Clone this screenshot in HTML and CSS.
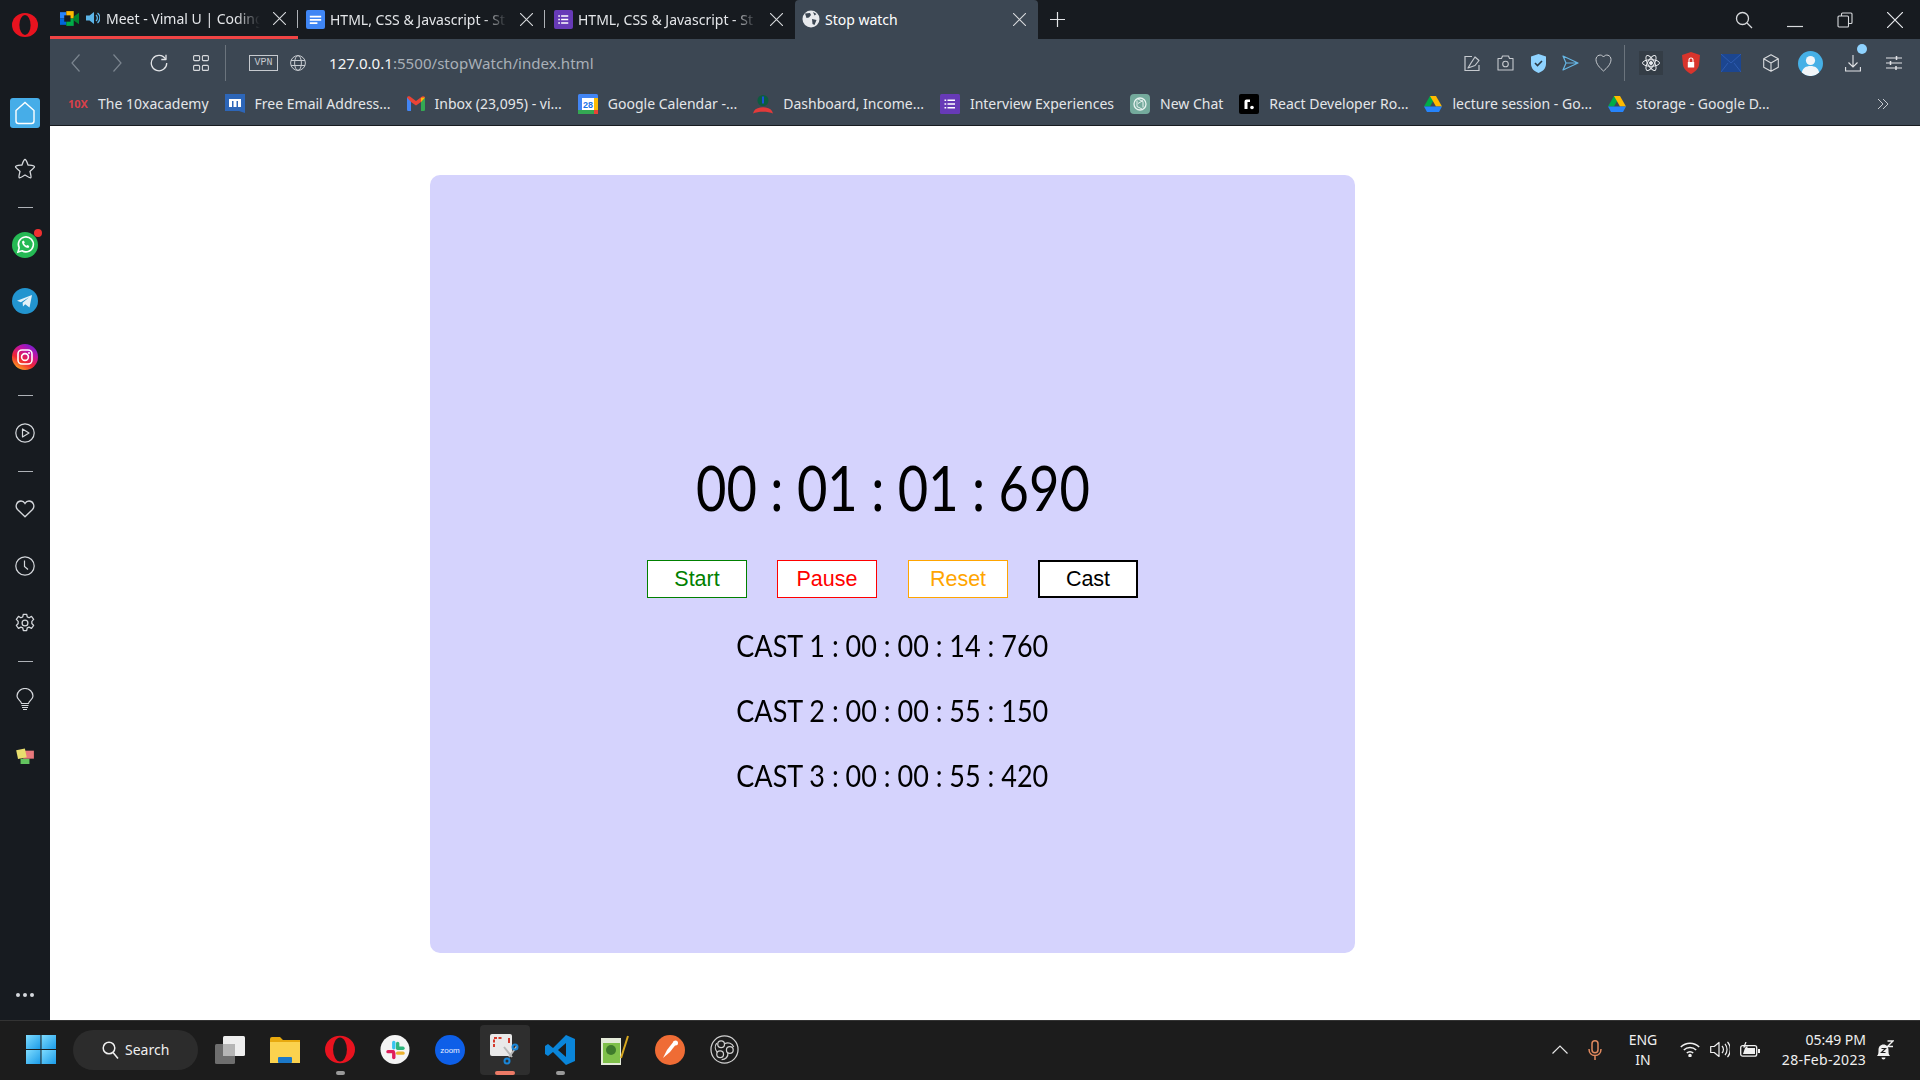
FILE: index.html
```html
<!DOCTYPE html>
<html>
<head>
    <meta charset="UTF-8">
    <title>Stop watch</title>
    <link rel="stylesheet" href="styles.css">
</head>
<body>
<div class="window">
    <!-- left strip -->
    <div class="sidebar">
        <svg class="opera-logo" viewBox="0 0 26 24"><ellipse cx="13" cy="12" rx="13" ry="12" fill="#e8131f"/><ellipse cx="13" cy="12" rx="5.6" ry="10" fill="#171b20"/></svg>
        <div class="side-slot"><div class="home-btn"><svg width="22" height="24" viewBox="0 0 22 24" fill="none" stroke="#fff" stroke-width="1.4"><path d="M2 9.5 11 1.5l9 8V20a2.5 2.5 0 0 1-2.5 2.5h-13A2.500 2.500 0 0 1 2 20z"/></svg></div></div>
        <div class="side-slot"><svg width="22" height="22" viewBox="0 0 22 22" fill="none" stroke="#d5d8dc" stroke-width="1.3" stroke-linejoin="round"><path d="M11 1.5c1 0 1.500 1 3 5.500 5 .5 6.500.5 6.500 1.700 0 .8-2 2.500-4.500 4.800 1 4 1.500 5.500.8 6.200-.8.6-2.500-.6-5.800-2.700-3.300 2.100-5 3.300-5.800 2.700-.7-.7-.2-2.200.8-6.200-2.500-2.300-4.500-4-4.500-4.800C1.500 7.500 3 7.500 8 7c1.500-4.500 2-5.500 3-5.500z"/></svg></div>
        <div class="side-divider"></div>
        <div class="side-slot"><div class="badge-wrap"><svg width="26" height="26" viewBox="0 0 26 26"><circle cx="13" cy="13" r="13" fill="#25b954"/><path d="M6 20l1.200-4.200A7.500 7.500 0 1 1 10 18.800z" fill="none" stroke="#fff" stroke-width="1.600"/><path d="M10 9.500c0 3.500 3 6.500 6.500 6.500l.8-2-2-1-1 .8c-1-.5-1.800-1.300-2.300-2.300l.8-1-1-2z" fill="#fff"/></svg><span class="red-badge"></span></div></div>
        <div class="side-slot"><svg width="26" height="26" viewBox="0 0 26 26"><circle cx="13" cy="13" r="13" fill="#2294cf"/><path d="M5 12.800 20 7l-2.500 12.500-4.300-3.200-2.200 2.200-.4-3.800 6.500-5.500-8.200 5z" fill="#e4f1f8"/></svg></div>
        <div class="side-slot"><svg width="26" height="26" viewBox="0 0 26 26"><defs><linearGradient id="igGrad" x1="0.2" y1="1" x2="0.8" y2="0"><stop offset="0" stop-color="#fdb224"/><stop offset="0.35" stop-color="#f0262f"/><stop offset="0.7" stop-color="#c013a6"/><stop offset="1" stop-color="#6a22d8"/></linearGradient></defs><circle cx="13" cy="13" r="13" fill="url(#igGrad)"/><rect x="6" y="6" width="14" height="14" rx="4" fill="none" stroke="#fff" stroke-width="1.6"/><circle cx="13" cy="13" r="3.4" fill="none" stroke="#fff" stroke-width="1.6"/><circle cx="17" cy="9" r="1" fill="#fff"/></svg></div>
        <div class="side-divider"></div>
        <div class="side-slot"><svg width="20" height="20" viewBox="0 0 20 20" fill="none" stroke="#d5d8dc" stroke-width="1.2"><circle cx="10" cy="10" r="9.2"/><path d="M7.500 6v8l6.500-4z" stroke-linejoin="round"/></svg></div>
        <div class="side-divider"></div>
        <div class="side-slot"><svg width="20" height="18" viewBox="0 0 20 18" fill="none" stroke="#d5d8dc" stroke-width="1.3"><path d="M10 16.800 2.500 9.500C-.5 6 2 1 6 1c1.800 0 3.200 1 4 2.400C10.800 2 12.200 1 14 1c4 0 6.500 5 3.500 8.500z"/></svg></div>
        <div class="side-slot tall"><svg width="20" height="20" viewBox="0 0 20 20" fill="none" stroke="#d5d8dc" stroke-width="1.2"><circle cx="10" cy="10" r="9.2"/><path d="M9.500 4.500v6l3.500 3"/></svg></div>
        <div class="side-slot tall"><svg width="20" height="20" viewBox="0 0 24 24" fill="none" stroke="#d5d8dc" stroke-width="1.5"><circle cx="12" cy="12" r="3.5"/><path d="M10 1.500h4l.7 3.200 2.200 1 2.900-1.600 2.600 3.500-2.200 2.400v2.600l2.200 2.400-2.600 3.500-2.900-1.600-2.200 1-.7 3.100h-4l-.7-3.100-2.200-1-2.900 1.600-2.600-3.500 2.200-2.400V10L1.600 7.600l2.600-3.500 2.900 1.600 2.200-1z" stroke-linejoin="round"/></svg></div>
        <div class="side-divider"></div>
        <div class="side-slot tall"><svg width="18" height="23" viewBox="0 0 18 23" fill="none" stroke="#d5d8dc" stroke-width="1.2"><path d="M5.500 15.500C5 12.800 1 11.500 1 8a8 7.500 0 0 1 16 0c0 3.500-4 4.800-4.500 7.500z"/><path d="M5.500 17.500h7M6 19.500h6M7 21.500h4"/></svg></div>
        <div class="side-slot"><svg width="18" height="16" viewBox="0 0 20 18"><rect x="5" y="12" width="10" height="6" fill="#63c45f"/><rect x="8" y="3" width="12" height="9" fill="#e8787c"/><rect x="1" y="1.500" width="10" height="10" fill="#e8de6e" transform="rotate(-12 6 6.500)"/></svg></div>
        <div class="side-dots"><span></span><span></span><span></span></div>
    </div>

    <div class="browser">
        <!-- tabs -->
        <div class="tabbar">
            <div class="tab tab-first">
                <svg class="favicon" viewBox="0 0 18 18"><rect x="0" y="3" width="6" height="6" fill="#2684fc"/><rect x="0" y="9" width="6" height="6" fill="#0066da"/><rect x="6" y="2" width="7" height="7" fill="#ffba00"/><rect x="6" y="9" width="7" height="7" fill="#00ac47"/><path d="m13 7 5-3.500v11L13 11z" fill="#00832d"/><rect x="4" y="6" width="6" height="6" fill="#171b20"/></svg>
                <svg class="speaker" viewBox="0 0 14 14"><path d="M0 4.500h3.500L8 1v12L3.500 9.500H0z" fill="#5cb5e8"/><path d="M10 4a4 4 0 0 1 0 6M11.500 2a6.500 6.500 0 0 1 0 10" fill="none" stroke="#5cb5e8" stroke-width="1.3"/></svg>
                <span class="tab-title">Meet - Vimal U | Coding</span>
                <svg class="tab-close" viewBox="0 0 12 12"><path d="M0 0l12 12M12 0 0 12"/></svg>
            </div>
            <div class="tab tab-second">
                <svg class="favicon" viewBox="0 0 20 20"><rect width="20" height="20" rx="2" fill="#3f86f5"/><path d="M4 6h12v1.800H4zM4 9.500h12v1.800H4zM4 13h8v1.800H4z" fill="#fff"/></svg>
                <span class="tab-title">HTML, CSS &amp; Javascript - St</span>
                <svg class="tab-close" viewBox="0 0 12 12"><path d="M0 0l12 12M12 0 0 12"/></svg>
            </div>
            <div class="tab tab-third">
                <svg class="favicon" viewBox="0 0 20 20"><rect width="20" height="20" rx="2" fill="#673ab7"/><path d="M7.500 5.500H15v1.600H7.500zM7.500 9.200H15v1.600H7.500zM7.500 12.900H15v1.600H7.500zM4.500 5.500h1.700v1.600H4.500zM4.500 9.200h1.700v1.600H4.500zM4.500 12.900h1.700v1.600H4.500z" fill="#fff"/></svg>
                <span class="tab-title">HTML, CSS &amp; Javascript - St</span>
                <svg class="tab-close" viewBox="0 0 12 12"><path d="M0 0l12 12M12 0 0 12"/></svg>
            </div>
            <div class="tab tab-active">
                <svg class="favicon globe-fav" viewBox="0 0 18 18"><circle cx="9" cy="9" r="8.500" fill="#e8eaed"/><path d="M3 3.500 8 3l1 2-2 2.500L4.500 8zM10 9l4.500 1-2 5-2-1zM11 2l3.500 2-2 1.500z" fill="#3c4753"/></svg>
                <span class="tab-title">Stop watch</span>
                <svg class="tab-close" viewBox="0 0 12 12"><path d="M0 0l12 12M12 0 0 12"/></svg>
            </div>
            <svg class="new-tab" viewBox="0 0 15 15"><path d="M7.500 0v15M0 7.500h15"/></svg>
            <div class="window-btns">
                <svg width="18" height="18" viewBox="0 0 18 18" fill="none" stroke="#d8dadd" stroke-width="1.3"><circle cx="7.500" cy="7.500" r="6"/><path d="m12 12 5 5"/></svg>
                <svg width="16" height="18" viewBox="0 0 16 18" fill="none" stroke="#d8dadd" stroke-width="1.2"><path d="M0 15.500h16"/></svg>
                <svg width="16" height="16" viewBox="0 0 16 16" fill="none" stroke="#d8dadd" stroke-width="1.1"><rect x="1" y="4" width="10.500" height="11" rx="1"/><path d="M4.500 4V2a1 1 0 0 1 1-1H14a1 1 0 0 1 1 1v8.500a1 1 0 0 1-1 1h-2.500"/></svg>
                <svg width="16" height="16" viewBox="0 0 16 16" fill="none" stroke="#e8eaed" stroke-width="1.2"><path d="M0 0l16 16M16 0 0 16"/></svg>
            </div>
        </div>

        <!-- address bar -->
        <div class="toolbar">
            <svg class="nav-back" width="9" height="18" viewBox="0 0 9 18" fill="none" stroke="#7b858f" stroke-width="1.2"><path d="M8.500.5 1 9l7.500 8.500"/></svg>
            <svg class="nav-forward" width="9" height="18" viewBox="0 0 9 18" fill="none" stroke="#7b858f" stroke-width="1.2"><path d="M.5.500 8 9 .5 17.500"/></svg>
            <svg class="nav-reload" width="18" height="18" viewBox="0 0 18 18" fill="none" stroke="#e2e4e7" stroke-width="1.3"><path d="M15.500 5A7.700 7.700 0 1 0 16.700 9"/><path d="M16 .8V5.500h-4.700" stroke-linejoin="round"/></svg>
            <svg class="nav-grid" width="16" height="16" viewBox="0 0 16 16" fill="none" stroke="#d8dadd" stroke-width="1.1"><rect x=".6" y=".6" width="6" height="5" rx="1"/><rect x="9.400" y=".6" width="6" height="5" rx="1"/><rect x=".6" y="10.400" width="6" height="5" rx="1"/><rect x="9.400" y="10.400" width="6" height="5" rx="1"/></svg>
            <div class="bar-sep"></div>
            <div class="vpn">VPN</div>
            <svg class="nav-globe" width="16" height="16" viewBox="0 0 16 16" fill="none" stroke="#c6cacf" stroke-width="1"><circle cx="8" cy="8" r="7.400"/><ellipse cx="8" cy="8" rx="3.400" ry="7.400"/><path d="M1 5.500h14M1 10.500h14"/></svg>
            <div class="url"><span class="url-host">127.0.0.1</span>:5500/stopWatch/index.html</div>

            <div class="tools">
                <div class="tool"><svg width="18" height="18" viewBox="0 0 18 18" fill="none" stroke="#c6cacf" stroke-width="1.2"><path d="M8 2.500H1v14h14V11"/><path d="m4 14 3-5 4-6 4 3.500-4 5z" stroke-linejoin="round"/></svg></div>
                <div class="tool"><svg width="17" height="16" viewBox="0 0 17 16" fill="none" stroke="#c6cacf" stroke-width="1.1"><path d="M1 3.500h3.500L5.500 1h6l1 2.500H16V15H1z" stroke-linejoin="round"/><circle cx="8.500" cy="9" r="2.800"/></svg></div>
                <div class="tool"><svg width="15" height="19" viewBox="0 0 15 19"><path d="M7.500 0 15 2.500V10c0 4.500-3.500 7.500-7.500 9C3.500 17.500 0 14.500 0 10V2.500z" fill="#8fd3ff"/><path d="m4 9 2.500 2.500L11 7" fill="none" stroke="#2b3a47" stroke-width="1.6"/></svg></div>
                <div class="tool"><svg width="17" height="16" viewBox="0 0 17 16" fill="none" stroke="#66b6e4" stroke-width="1.2"><path d="m1 1 15 7-15 7 3-7zM4 8h12" stroke-linejoin="round"/></svg></div>
                <div class="tool"><svg width="17" height="18" viewBox="0 0 17 18" fill="none" stroke="#c6cacf" stroke-width="1"><path d="M8.500 17C5 14 1 10 1 5.500 1 1 6.500-.5 8.500 3c2-3.500 7.500-2 7.500 2.500C16 10 12 14 8.500 17z"/></svg></div>
                <div class="bar-sep tools-sep"></div>
                <div class="ext"><div class="atom-bg"><svg width="18" height="18" viewBox="0 0 18 18" fill="none" stroke="#e8eaed" stroke-width="1"><ellipse cx="9" cy="9" rx="8.500" ry="3.300"/><ellipse cx="9" cy="9" rx="8.500" ry="3.300" transform="rotate(60 9 9)"/><ellipse cx="9" cy="9" rx="8.500" ry="3.300" transform="rotate(120 9 9)"/><circle cx="9" cy="9" r="1.500" fill="#e8eaed"/></svg></div></div>
                <div class="ext"><svg width="18" height="22" viewBox="0 0 18 22"><path d="M9 0l9 3-1 10c-.7 4-4 7-8 9-4-2-7.300-5-8-9L0 3z" fill="#d8342c"/><rect x="5.800" y="10" width="6.400" height="5.500" fill="#fff"/><path d="M7 10V8a2 2 0 0 1 4 0v2" fill="none" stroke="#fff" stroke-width="1.1"/></svg></div>
                <div class="ext"><svg width="20" height="18" viewBox="0 0 20 18"><rect width="20" height="18" fill="#1c4690"/><path d="m0 0 10 9 10-9M0 18l7-9M20 18l-7-9" fill="none" stroke="#2e5cb0" stroke-width="1"/></svg></div>
                <div class="ext"><svg width="16" height="18" viewBox="0 0 16 18" fill="none" stroke="#d8dadd" stroke-width="1.1"><path d="M8 .7 15.300 4.800v8.400L8 17.300.7 13.200V4.800zM.7 4.800 8 9l7.300-4.200M8 9v8.300" stroke-linejoin="round"/></svg></div>
                <div class="ext"><svg width="25" height="25" viewBox="0 0 25 25"><circle cx="12.500" cy="12.500" r="12.500" fill="#46b0e6"/><circle cx="12.500" cy="9.500" r="4.600" fill="#f2f6f9"/><path d="M3.800 21.500c1-4.500 4.200-6.500 8.700-6.500s7.700 2 8.700 6.500a12.500 12.500 0 0 1-17.400 0z" fill="#f2f6f9"/></svg></div>
                <div class="ext download-tool"><svg width="16" height="18" viewBox="0 0 16 18" fill="none" stroke="#e2e4e7" stroke-width="1.1"><path d="M8 1v12M3.500 8.500 8 13l4.500-4.500M.6 13v4h14.800v-4"/></svg><span class="download-dot"></span></div>
                <div class="ext settings-tool"><svg width="16" height="16" viewBox="0 0 16 16" fill="none" stroke="#e2e4e7" stroke-width="1.1"><path d="M0 3h16M0 8h16M0 13h16"/><path d="M10.500 1v4M4.500 6v4M10 11v4" stroke-width="1.5"/></svg></div>
            </div>
        </div>

        <!-- bookmarks -->
        <div class="bookmarks">
            <div class="bm"><span class="tenx">10X</span><span>The 10xacademy</span></div>
            <div class="bm"><svg width="20" height="24" viewBox="0 0 20 24"><path d="M0 2h20v19l-6-2-14 0z" fill="#2d66b8"/><path d="M4 15V7h3v8zM8.500 15V7h3v8zM13 15V7h3v8zM4 7h12v2H4z" fill="#fff"/></svg><span>Free Email Address...</span></div>
            <div class="bm"><svg width="18" height="15" viewBox="0 0 18 15"><path d="M0 1.500 4 4v11H1.200A1.200 1.200 0 0 1 0 13.800z" fill="#4285f4"/><path d="M14 4l4-2.500v12.300a1.200 1.200 0 0 1-1.200 1.200H14z" fill="#34a853"/><path d="M0 1.500C.5 0 2 0 3 .6L9 5l6-4.400c1-.6 2.500-.6 3 .9L14 6 9 9.500 4 6z" fill="#ea4335"/><path d="M14 1.700 18 1.500 14 6z" fill="#fbbc04"/></svg><span>Inbox (23,095) - vi...</span></div>
            <div class="bm"><svg width="20" height="20" viewBox="0 0 20 20"><rect width="20" height="20" rx="1.500" fill="#4285f4"/><rect x="4" y="4" width="12" height="12" fill="#fff"/><rect y="16" width="16" height="4" fill="#34a853"/><rect x="16" y="4" width="4" height="12" fill="#fbbc04"/><rect x="16" y="16" width="4" height="4" fill="#ea4335"/><text x="10" y="13.500" class="cal-day">28</text></svg><span>Google Calendar -...</span></div>
            <div class="bm"><svg width="20" height="20" viewBox="0 0 20 20"><circle cx="10" cy="6.500" r="5.500" fill="#0d5c3f"/><rect x="9" y="2.500" width="2" height="7" fill="#1d4ed8"/><path d="M1 17c3-5 15-5 18 0l1 2.500c-5-2.500-15-2.500-20 0z" fill="#e23a3a"/></svg><span>Dashboard, Income...</span></div>
            <div class="bm"><svg width="20" height="24" viewBox="0 0 20 24"><rect y="2" width="20" height="20" rx="1.500" fill="#673ab7"/><path d="M7.500 7.500H15v1.600H7.500zM7.500 11.200H15v1.600H7.500zM7.500 14.900H15v1.600H7.500zM4.500 7.500h1.700v1.600H4.500zM4.500 11.200h1.700v1.600H4.500zM4.500 14.900h1.700v1.600H4.500z" fill="#fff"/></svg><span>Interview Experiences</span></div>
            <div class="bm"><svg width="20" height="24" viewBox="0 0 20 24"><rect y="2" width="20" height="20" rx="4" fill="#74aa9c"/><circle cx="10" cy="12" r="6" fill="none" stroke="#e8f3f0" stroke-width="1.3"/><path d="M7 8.500v6l5 2.500M13 8.500l-5 3v0M13 15.500v-6L8 7" fill="none" stroke="#e8f3f0" stroke-width="1"/></svg><span>New Chat</span></div>
            <div class="bm"><svg width="20" height="24" viewBox="0 0 20 24"><rect y="2" width="20" height="20" rx="2" fill="#000"/><path d="M5.500 17V9.500a2 2 0 0 1 2-2h3.500v2.500H8.500V17z" fill="#fff"/><circle cx="13" cy="15.500" r="1.800" fill="#fff"/></svg><span>React Developer Ro...</span></div>
            <div class="bm"><svg width="18" height="16" viewBox="0 0 18 16"><path d="M6 0h6L6 10.500H0z" fill="#00ac47"/><path d="M12 0l6 10.500h-6L6 0z" fill="#ffba00"/><path d="M0 10.500h18L15 16H3z" fill="#2684fc"/></svg><span>lecture session - Go...</span></div>
            <div class="bm"><svg width="18" height="16" viewBox="0 0 18 16"><path d="M6 0h6L6 10.500H0z" fill="#00ac47"/><path d="M12 0l6 10.500h-6L6 0z" fill="#ffba00"/><path d="M0 10.500h18L15 16H3z" fill="#2684fc"/></svg><span>storage - Google D...</span></div>
            <svg class="bm-more" width="12" height="12" viewBox="0 0 12 12" fill="none" stroke="#c6cacf" stroke-width="1"><path d="m1 1 5 5-5 5M6 1l5 5-5 5"/></svg>
        </div>

        <!-- the page -->
        <div class="page">
            <div class="stopwatch">
                <h1 class="timer">00 : 01 : 01 : 690</h1>
                <div class="controls">
                    <button class="btn btn-start">Start</button>
                    <button class="btn btn-pause">Pause</button>
                    <button class="btn btn-reset">Reset</button>
                    <button class="btn btn-cast">Cast</button>
                </div>
                <p class="cast-line">CAST 1 : 00 : 00 : 14 : 760</p>
                <p class="cast-line">CAST 2 : 00 : 00 : 55 : 150</p>
                <p class="cast-line">CAST 3 : 00 : 00 : 55 : 420</p>
            </div>
        </div>
    </div>
</div>

<!-- windows taskbar -->
<div class="taskbar">
    <svg class="start-logo" width="30" height="29" viewBox="0 0 30 29"><defs><linearGradient id="winGrad" x1="0" y1="0" x2="1" y2="1"><stop offset="0" stop-color="#7fdcff"/><stop offset="1" stop-color="#1a9be8"/></linearGradient></defs><rect width="14.500" height="14" fill="url(#winGrad)"/><rect x="15.500" width="14.500" height="14" fill="url(#winGrad)"/><rect y="15" width="14.500" height="14" fill="url(#winGrad)"/><rect x="15.500" y="15" width="14.500" height="14" fill="url(#winGrad)"/></svg>
    <div class="search-pill">
        <svg width="17" height="18" viewBox="0 0 17 18" fill="none" stroke="#f0f0f0" stroke-width="1.5"><circle cx="7" cy="7" r="5.800"/><path d="m11 11.500 5 6"/></svg>
        <span>Search</span>
    </div>
    <div class="apps">
        <div class="app"><svg width="30" height="28" viewBox="0 0 30 28"><rect y="8" width="20" height="20" rx="1.500" fill="#6e6e6e"/><rect x="8" width="22" height="20" rx="1.500" fill="#eee"/><rect x="8" y="8" width="12" height="12" fill="#b5b5b5"/></svg></div>
        <div class="app"><svg width="30" height="26" viewBox="0 0 30 26"><path d="M0 2a2 2 0 0 1 2-2h8l3 3h17v23H0z" fill="#e8a90e"/><rect y="5" width="30" height="21" fill="#fbd24e"/><rect x="8" y="20" width="14" height="6" rx="1" fill="#1b78c8"/></svg></div>
        <div class="app running"><svg width="30" height="29" viewBox="0 0 26 24"><ellipse cx="13" cy="12" rx="13" ry="12" fill="#e8131f"/><ellipse cx="13" cy="12" rx="6" ry="10.500" fill="#1c1c1c"/></svg></div>
        <div class="app"><svg width="30" height="29" viewBox="0 0 30 30"><circle cx="15" cy="15" r="15" fill="#f4f4f4"/><rect x="12" y="6" width="3.500" height="9" rx="1.700" fill="#36c5f0"/><rect x="6" y="15.500" width="9" height="3.500" rx="1.700" fill="#e01e5a"/><rect x="16" y="7" width="3.500" height="8" rx="1.700" fill="#2eb67d"/><rect x="16" y="12" width="9" height="3.500" rx="1.700" fill="#2eb67d"/><rect x="16" y="17" width="9" height="3.500" rx="1.700" fill="#ecb22e"/><rect x="12" y="17" width="3.500" height="8" rx="1.700" fill="#e01e5a"/></svg></div>
        <div class="app"><svg width="30" height="30" viewBox="0 0 30 30"><circle cx="15" cy="15" r="15" fill="#0e5fe8"/><text x="15" y="17.500" class="zoom-text">zoom</text></svg></div>
        <div class="app active"><svg width="30" height="31" viewBox="0 0 30 31"><rect width="22" height="22" rx="2" fill="#e9e9e9"/><path d="M4 13V4h9" fill="none" stroke="#d5392c" stroke-width="2" stroke-dasharray="3 1.500"/><path d="M19 4v5" stroke="#d5392c" stroke-width="2"/><path d="m14 13 8 10M27 12l-8 11" stroke="#b8b8b8" stroke-width="2"/><circle cx="25" cy="13" r="2.500" fill="none" stroke="#1a86d8" stroke-width="2"/><circle cx="17" cy="27" r="2.500" fill="none" stroke="#1a86d8" stroke-width="2"/></svg></div>
        <div class="app running"><svg width="30" height="30" viewBox="0 0 30 30"><path d="M21 0l9 4v22l-9 4L8 17l-5 4-3-2v-8l3-2 5 4z" fill="#0a85d9"/><path d="m21 8-8 7 8 7z" fill="#1c1c1c"/></svg></div>
        <div class="app"><svg width="30" height="30" viewBox="0 0 30 30"><path d="M1 3h20v27H1z" fill="#e4ebd8"/><rect x="3" y="8" width="17" height="20" fill="#7fc04a"/><circle cx="11" cy="15" r="5" fill="#3f7a2c"/><path d="m28 1-7 22" stroke="#d8a820" stroke-width="2"/></svg></div>
        <div class="app"><svg width="30" height="30" viewBox="0 0 30 30"><circle cx="15" cy="15" r="15" fill="#ef6c35"/><path d="M8 23l7-6 7-9-3-2-7 9z" fill="#fff"/><circle cx="20.500" cy="8" r="2.500" fill="#fff"/></svg></div>
        <div class="app"><svg width="29" height="29" viewBox="0 0 30 30" fill="none" stroke="#d0d0d0" stroke-width="1.3"><circle cx="15" cy="15" r="14"/><circle cx="11.500" cy="9.500" r="3.500"/><circle cx="20.500" cy="15.500" r="3.500"/><circle cx="10.500" cy="20" r="3.500"/><path d="M15 9c4-2 8-.5 9.500 3.500M18.500 18.500c.5 4-2.500 7-6.500 7M7.500 18c-2.500-3-2.500-7-.5-9.500"/></svg></div>
    </div>
    <div class="tray">
        <svg class="tray-chevron" width="16" height="9" viewBox="0 0 16 9" fill="none" stroke="#e6e6e6" stroke-width="1.2"><path d="M.5 8.500 8 1l7.500 7.500"/></svg>
        <svg class="tray-mic" width="14" height="20" viewBox="0 0 14 20" fill="none" stroke="#e08a5f" stroke-width="1.5"><rect x="4" y=".8" width="6" height="12" rx="3"/><path d="M1 9c0 4 2.500 6.500 6 6.500S13 13 13 9M7 15.500V20"/></svg>
        <div class="tray-lang"><span>ENG</span><span>IN</span></div>
        <svg class="tray-wifi" width="20" height="15" viewBox="0 0 20 15" fill="none" stroke="#f0f0f0" stroke-width="1.5"><path d="M.8 5a13 13 0 0 1 18.400 0M3.800 8a9 9 0 0 1 12.400 0M6.800 11a4.500 4.500 0 0 1 6.400 0"/><circle cx="10" cy="13.500" r="1" fill="#f0f0f0"/></svg>
        <svg class="tray-sound" width="20" height="17" viewBox="0 0 20 17" fill="none" stroke="#f0f0f0" stroke-width="1.2"><path d="M.7 5.500h3.500L9 1.500v14l-4.800-4H.7z" stroke-linejoin="round"/><path d="M12 5a5 5 0 0 1 0 7M15 2.800a9 9 0 0 1 0 11.400M17.500.8a12 12 0 0 1 0 15.400"/></svg>
        <svg class="tray-battery" width="20" height="16" viewBox="0 0 20 16"><rect x=".7" y="3.700" width="16" height="10.500" rx="2" fill="none" stroke="#f0f0f0" stroke-width="1.3"/><path d="M3 12l2-6h10v6z" fill="#f0f0f0"/><rect x="18" y="7" width="2" height="4" fill="#f0f0f0"/><path d="M6 0 4 5h3L5.500 8.500" fill="none" stroke="#f0f0f0" stroke-width="1.2"/></svg>
        <div class="tray-clock"><span>05:49 PM</span><span class="tray-date">28-Feb-2023</span></div>
        <svg class="tray-bell" width="18" height="20" viewBox="0 0 18 20"><path d="M1 16c1.500-1.500 1.500-3.500 1.500-6 0-3.200 2-5.500 5-5.500s5 2.300 5 5.500c0 2.500 0 4.500 1.500 6z" fill="#f0f0f0"/><path d="M5.500 17.500h4a2 2 0 0 1-4 0z" fill="#f0f0f0"/><path d="M5.500 8.500h4l-4 4h4" fill="none" stroke="#1c1c1c" stroke-width="1.200"/><path d="M11.500 1h5.500l-5.500 5.500H17" fill="none" stroke="#f0f0f0" stroke-width="1.400"/></svg>
    </div>
</div>
</body>
</html>
```

FILE: styles.css
```css
* {
    box-sizing: border-box;
}

html, body {
    margin: 0;
    padding: 0;
    width: 1920px;
    height: 1080px;
    overflow: hidden;
}

body {
    display: flex;
    flex-direction: column;
    font-family: "Noto Sans", sans-serif;
    background-color: #171b20;
}

.window {
    display: flex;
    flex: 1;
    min-height: 0;
}

/* left strip */
.sidebar {
    width: 50px;
    flex-shrink: 0;
    display: flex;
    flex-direction: column;
    align-items: center;
    background-color: #171b20;
}

.opera-logo {
    width: 26px;
    height: 24px;
    margin: 13px 0 48px 0;
    flex-shrink: 0;
}

.side-slot {
    width: 100%;
    height: 56px;
    flex-shrink: 0;
    display: flex;
    align-items: center;
    justify-content: center;
}

.side-slot.tall {
    height: 57px;
}

.side-divider {
    width: 15px;
    height: 20px;
    flex-shrink: 0;
    background: linear-gradient(#aeb2b7, #aeb2b7) center / 15px 1px no-repeat;
}

.home-btn {
    width: 30px;
    height: 30px;
    border-radius: 3px;
    background-color: #46ade8;
    display: flex;
    align-items: center;
    justify-content: center;
}

.badge-wrap {
    position: relative;
    width: 26px;
    height: 26px;
}

.red-badge {
    position: absolute;
    top: -3px;
    right: -4px;
    width: 8px;
    height: 8px;
    border-radius: 50%;
    background-color: #f03030;
}

.side-dots {
    display: flex;
    gap: 3px;
    margin-top: auto;
    margin-bottom: 23px;
}

.side-dots span {
    width: 4px;
    height: 4px;
    border-radius: 50%;
    background-color: #d5d8dc;
}

.browser {
    flex: 1;
    min-width: 0;
    display: flex;
    flex-direction: column;
}

/* tabs */
.tabbar {
    height: 39px;
    flex-shrink: 0;
    display: flex;
    align-items: center;
    background-color: #171b20;
    color: #e4e6e9;
    font-size: 14px;
}

.tab {
    height: 39px;
    display: flex;
    align-items: center;
    padding: 0 12px 1px 10px;
    flex-shrink: 0;
    position: relative;
    background-color: #171b20;
}

.tab-first {
    width: 248px;
    border-bottom: 3px solid #f04444;
    padding-bottom: 0;
}

.tab-second {
    width: 247px;
    padding-left: 8px;
}

.tab-third {
    width: 250px;
    padding-left: 9px;
}

.tab-first:after, .tab-second:after {
    content: "";
    position: absolute;
    right: 0;
    top: 10px;
    height: 18px;
    width: 1px;
    background-color: #aeb2b7;
}

.tab-active {
    width: 243px;
    padding-left: 7px;
    padding-right: 12px;
    background-color: #3c4753;
    border-radius: 4px 4px 0 0;
    color: #fff;
}

.favicon {
    width: 19px;
    height: 19px;
    flex-shrink: 0;
    margin-right: 5px;
}

.globe-fav {
    width: 18px;
    height: 18px;
}

.speaker {
    width: 14px;
    height: 14px;
    flex-shrink: 0;
    margin: 0 6px 0 2px;
}

.tab-title {
    flex: 1;
    min-width: 0;
    overflow: hidden;
    white-space: nowrap;
    -webkit-mask-image: linear-gradient(to left, transparent 4px, #000 28px);
    mask-image: linear-gradient(to left, transparent 4px, #000 28px);
}

.tab-active .tab-title {
    -webkit-mask-image: none;
    mask-image: none;
}

.tab-close {
    width: 13px;
    height: 13px;
    flex-shrink: 0;
    margin-left: 9px;
    stroke: #d8dadd;
    stroke-width: 1;
    fill: none;
}

.new-tab {
    width: 15px;
    height: 15px;
    margin-left: 12px;
    stroke: #e4e6e9;
    stroke-width: 1.2;
    fill: none;
}

.window-btns {
    display: flex;
    align-items: center;
    margin-left: auto;
    margin-right: 17px;
    gap: 34px;
}

/* address bar */
.toolbar {
    height: 49px;
    flex-shrink: 0;
    display: flex;
    align-items: center;
    padding-bottom: 1px;
    background-color: #3c4753;
    color: #a9b0b8;
}

.nav-back {
    margin-left: 21px;
}

.nav-forward {
    margin-left: 33px;
}

.nav-reload {
    margin-left: 28px;
}

.nav-grid {
    margin-left: 25px;
}

.bar-sep {
    width: 1px;
    height: 36px;
    background-color: #6b747d;
    flex-shrink: 0;
    margin-left: 16px;
}

.vpn {
    width: 29px;
    height: 16px;
    margin-left: 23px;
    border: 1px solid #c6cacf;
    color: #c6cacf;
    font-family: "Liberation Mono", monospace;
    font-size: 10px;
    line-height: 14px;
    text-align: center;
}

.nav-globe {
    margin-left: 12px;
}

.url {
    margin-left: 23px;
    font-size: 15.1px;
    white-space: nowrap;
}

.url-host {
    color: #f4f5f6;
}

.tools {
    margin-left: auto;
    margin-right: 6px;
    display: flex;
    align-items: center;
}

.tool {
    width: 32.5px;
    display: flex;
    justify-content: center;
}

.tools-sep {
    margin-left: 4px;
    margin-right: 6px;
}

.ext {
    position: relative;
    width: 40px;
    display: flex;
    justify-content: center;
}

.download-tool {
    margin-left: 2px;
}

.settings-tool {
    margin-left: 1.5px;
}

.atom-bg {
    width: 24px;
    height: 24px;
    background-color: #343d46;
    display: flex;
    align-items: center;
    justify-content: center;
}

.download-dot {
    position: absolute;
    top: -10px;
    right: 6px;
    width: 10px;
    height: 10px;
    border-radius: 50%;
    background-color: #8fd3ff;
}

/* bookmarks */
.bookmarks {
    height: 38px;
    flex-shrink: 0;
    display: flex;
    align-items: center;
    gap: 16px;
    padding: 0 0 6px 18px;
    background-color: #3c4753;
    border-bottom: 1px solid #171b20;
    color: #e4e6e9;
    font-size: 14px;
}

.bm {
    display: flex;
    align-items: center;
    gap: 10px;
    white-space: nowrap;
}

.tenx {
    width: 20px;
    color: #d8404a;
    font-size: 11px;
    font-weight: 700;
}

.cal-day {
    font-family: "Liberation Sans", sans-serif;
    font-size: 9px;
    font-weight: 700;
    fill: #1a73e8;
    text-anchor: middle;
}

.zoom-text {
    font-family: "Liberation Sans", sans-serif;
    font-size: 8px;
    fill: #e8f0ff;
    text-anchor: middle;
}

.bm-more {
    margin-left: auto;
    margin-right: 31px;
}

/* the page */
.page {
    flex: 1;
    min-height: 0;
    background-color: #fff;
    padding: 49px 0 0 380px;
}

.stopwatch {
    width: 925px;
    height: 778px;
    padding-top: 273px;
    border-radius: 10px;
    background-color: #d5d3fd;
    color: #000;
    font-family: Lato, sans-serif;
    text-align: center;
    display: flex;
    flex-direction: column;
    align-items: center;
}

.timer {
    margin: 0;
    font-size: 61px;
    font-weight: 400;
    line-height: 80px;
    white-space: nowrap;
    transform: scaleX(.86);
}

.controls {
    display: flex;
    gap: 30px;
    margin: 32px 0 15px 0;
}

.btn {
    width: 100px;
    height: 38px;
    padding: 0;
    background-color: #fff;
    border: 1px solid;
    border-radius: 0;
    font-family: "Liberation Sans", Arial, sans-serif;
    font-size: 21.5px;
    cursor: pointer;
}

.btn-start {
    color: green;
    border-color: green;
}

.btn-pause {
    color: red;
    border-color: red;
}

.btn-reset {
    margin-left: 1px;
    color: orange;
    border-color: orange;
}

.btn-cast {
    color: #000;
    border: 2px solid #000;
}

.cast-line {
    margin: 0;
    height: 65px;
    line-height: 65px;
    font-size: 30px;
    white-space: nowrap;
    transform: scaleX(.9);
}

/* windows taskbar */
.taskbar {
    height: 60px;
    flex-shrink: 0;
    display: flex;
    align-items: center;
    padding-bottom: 2px;
    background-color: #1c1c1c;
    border-top: 1px solid #333;
    color: #f0f0f0;
}

.start-logo {
    margin-left: 26px;
}

.search-pill {
    width: 125px;
    height: 40px;
    margin-left: 17px;
    border-radius: 20px;
    background-color: #2c2c2c;
    display: flex;
    align-items: center;
    gap: 6px;
    padding-left: 29px;
    font-size: 14px;
}

.apps {
    display: flex;
    margin-left: 4px;
}

.app {
    position: relative;
    width: 50px;
    height: 50px;
    margin: 0 2.5px;
    display: flex;
    align-items: center;
    justify-content: center;
    border-radius: 4px;
}

.app.active {
    background-color: #2e2e2e;
}

.app.running:after, .app.active:after {
    content: "";
    position: absolute;
    bottom: 0;
    left: 21px;
    width: 9px;
    height: 4px;
    border-radius: 2px;
    background-color: #9a9a9a;
}

.app.active:after {
    left: 15px;
    width: 20px;
    background-color: #ec7a66;
}

.tray {
    margin-left: auto;
    display: flex;
    align-items: center;
    padding-right: 26px;
    font-size: 14px;
}

.tray-mic {
    margin-left: 20px;
}

.tray-lang {
    display: flex;
    flex-direction: column;
    align-items: center;
    width: 40px;
    margin-left: 21px;
    line-height: 20px;
}

.tray-wifi {
    margin-left: 17px;
}

.tray-sound {
    margin-left: 10px;
}

.tray-battery {
    margin-left: 10px;
}

.tray-clock {
    display: flex;
    flex-direction: column;
    align-items: flex-end;
    width: 106px;
    line-height: 20px;
}

.tray-date {
    letter-spacing: .3px;
}

.tray-bell {
    margin-left: 10px;
}
```
